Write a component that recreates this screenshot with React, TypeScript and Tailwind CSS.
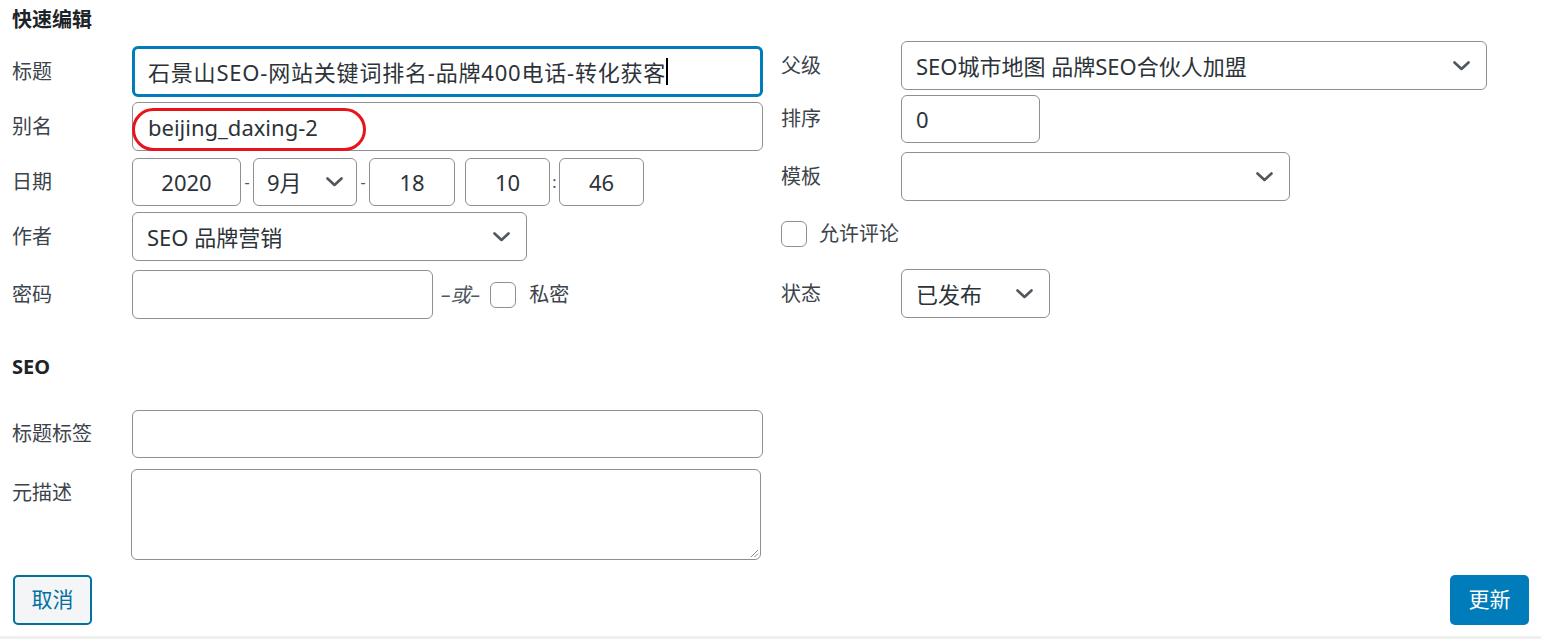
import React from 'react';

function Chevron() {
  return (
    <svg width="17" height="10" viewBox="0 0 17 10" fill="none" className="shrink-0">
      <path d="M1.5 1.5 L8.5 8 L15.5 1.5" stroke="#50575e" strokeWidth="2.6" strokeLinecap="round" strokeLinejoin="round" />
    </svg>
  );
}

function Label({ children }: { children: React.ReactNode }) {
  return <div className="w-[120px] shrink-0 text-[20px] leading-[24px] text-[#3c434a]">{children}</div>;
}

function Box({ className, children }: { className?: string; children?: React.ReactNode }) {
  return (
    <div className={`flex items-center border-[1.5px] border-[#8c8f94] rounded-[6px] bg-white text-[22px] leading-none text-[#2c3338] ${className ?? ''}`}>
      {children}
    </div>
  );
}

function Select({ className, text }: { className?: string; text: string }) {
  return (
    <Box className={`justify-between pl-[14px] pr-[16px] ${className ?? ''}`}>
      <span>{text}</span>
      <Chevron />
    </Box>
  );
}

function Check() {
  return <div className="w-[26px] h-[26px] border-[1.5px] border-[#8c8f94] rounded-[6px] bg-white shrink-0" />;
}

export default function App() {
  return (
    <div className="w-[1541px] h-[639px] bg-white flex flex-col font-['Noto_Sans','Noto_Sans_CJK_SC',sans-serif] overflow-hidden">
      <div className="px-[12px] flex-1">
        {/* heading */}
        <div className="h-[41px] pt-[8px]">
          <h2 className="text-[20px] leading-[24px] font-bold text-[#1d2327]">快速编辑</h2>
        </div>

        <div className="flex items-start">
          {/* left column */}
          <div className="w-[751px] pt-[5px] flex flex-col">
            <div className="flex items-center">
              <Label>标题</Label>
              <div className="w-[631px] h-[51px] flex items-center border-[3px] border-[#007cba] rounded-[6px] pl-[13px] text-[22px] leading-none text-[#2c3338]">
                <span className="tracking-[0.8px]">石景山SEO-网站关键词排名-品牌400电话-转化获客</span>
                <span className="inline-block w-[1.5px] h-[27px] bg-black" />
              </div>
            </div>

            <div className="flex items-center mt-[5px]">
              <Label>别名</Label>
              <div className="relative">
                <Box className="w-[631px] h-[49px] pl-[15px]">beijing_daxing-2</Box>
                <div className="absolute left-0 top-[6px] w-[234px] h-[43px] border-[3px] border-[#e8141c] rounded-[22px]" />
              </div>
            </div>

            <div className="flex items-center mt-[7px]">
              <Label>日期</Label>
              <div className="flex items-center text-[16px] text-[#50575e]">
                <Box className="w-[109px] h-[48px] justify-center">2020</Box>
                <span className="w-[12px] text-center">-</span>
                <Box className="w-[104px] h-[48px] justify-between pl-[13px] pr-[13px]">
                  <span>9月</span>
                  <Chevron />
                </Box>
                <span className="w-[12px] text-center">-</span>
                <Box className="w-[86px] h-[48px] justify-center">18</Box>
                <span className="w-[10px]" />
                <Box className="w-[85px] h-[48px] justify-center">10</Box>
                <span className="w-[9px] text-center">:</span>
                <Box className="w-[85px] h-[48px] justify-center">46</Box>
              </div>
            </div>

            <div className="flex items-center mt-[6px]">
              <Label>作者</Label>
              <Select className="w-[395px] h-[49px]" text="SEO 品牌营销" />
            </div>

            <div className="flex items-center mt-[9px]">
              <Label>密码</Label>
              <Box className="w-[301px] h-[49px]" />
              <span className="ml-[8px] italic text-[20px] text-[#50575e]">–或–</span>
              <div className="ml-[10px]">
                <Check />
              </div>
              <span className="ml-[13px] text-[20px] text-[#3c434a]">私密</span>
            </div>
          </div>

          {/* right column */}
          <div className="ml-[18px] flex flex-col">
            <div className="flex items-center">
              <Label>父级</Label>
              <Select className="w-[586px] h-[49px]" text="SEO城市地图 品牌SEO合伙人加盟" />
            </div>
            <div className="flex items-center mt-[5px]">
              <Label>排序</Label>
              <Box className="w-[139px] h-[48px] pl-[14px]">0</Box>
            </div>
            <div className="flex items-center mt-[9px]">
              <Label>模板</Label>
              <Select className="w-[389px] h-[49px]" text="" />
            </div>
            <div className="flex items-center mt-[20px] h-[26px]">
              <Check />
              <span className="ml-[12px] text-[20px] leading-[24px] text-[#3c434a]">允许评论</span>
            </div>
            <div className="flex items-center mt-[22px]">
              <Label>状态</Label>
              <Select className="w-[149px] h-[49px]" text="已发布" />
            </div>
          </div>
        </div>

        {/* SEO */}
        <h3 className="mt-[36px] text-[20px] leading-[24px] font-bold text-[#1d2327]">SEO</h3>

        <div className="flex items-center mt-[31px]">
          <Label>标题标签</Label>
          <Box className="w-[631px] h-[48px]" />
        </div>

        <div className="flex items-start mt-[11px]">
          <div className="pt-[12px]">
            <div className="w-[119px] text-[20px] leading-[24px] text-[#3c434a]">元描述</div>
          </div>
          <div className="relative w-[630px] h-[91px] border-[1.5px] border-[#8c8f94] rounded-[6px] bg-white">
            <svg className="absolute right-[1px] bottom-[1px]" width="9" height="9" viewBox="0 0 9 9">
              <path d="M8 1 L1 8 M8 4.5 L4.5 8" stroke="#8c8f94" strokeWidth="1" />
            </svg>
          </div>
        </div>

        <div className="flex justify-between mt-[15px]">
          <button className="ml-[1px] w-[79px] h-[50px] border-2 border-[#0071a1] rounded-[5px] bg-[#f3f5f6] text-[21px] text-[#0071a1]">
            取消
          </button>
          <button className="w-[79px] h-[50px] rounded-[5px] bg-[#007cba] text-[21px] text-white">
            更新
          </button>
        </div>
      </div>
      <div className="h-[3px] bg-[#f0f0f1]" />
    </div>
  );
}
